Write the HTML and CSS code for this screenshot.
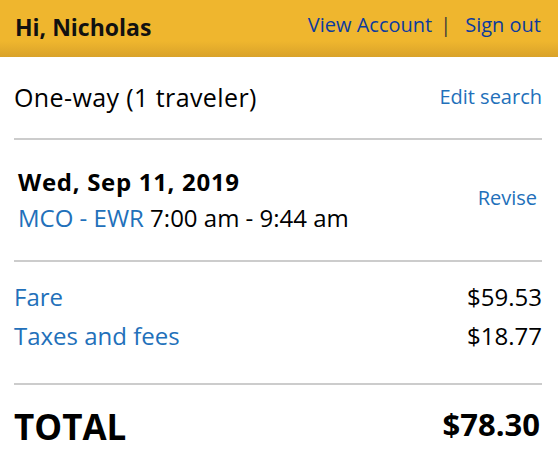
FILE: index.html
```html
<!DOCTYPE html>
<html>
<head>
<meta charset="utf-8">
<link rel="stylesheet" href="styles.css">
</head>
<body>
<header class="topbar">
  <div class="greeting">Hi, Nicholas</div>
  <nav class="account">
    <a class="toplink" href="#">View Account</a>
    <span class="sep">|</span>
    <a class="toplink" href="#">Sign out</a>
  </nav>
</header>
<main class="content">
  <section class="row trip">
    <div class="trip-type">One-way (1 traveler)</div>
    <a class="link small" href="#">Edit search</a>
  </section>
  <section class="row flight">
    <div class="flight-info">
      <div class="date">Wed, Sep 11, 2019</div>
      <div class="route"><span class="link">MCO - EWR</span> 7:00 am - 9:44 am</div>
    </div>
    <a class="link small revise" href="#">Revise</a>
  </section>
  <section class="costs">
    <div class="cost-row"><span class="link">Fare</span><span>$59.53</span></div>
    <div class="cost-row"><span class="link">Taxes and fees</span><span>$18.77</span></div>
  </section>
  <section class="total">
    <span class="total-label">TOTAL</span>
    <span class="total-amount">$78.30</span>
  </section>
</main>
</body>
</html>
```

FILE: styles.css
```css
*, *::before, *::after { box-sizing: border-box; }
html, body {
  margin: 0;
  padding: 0;
  background: #ffffff;
}
body {
  font-family: "Open Sans", "Noto Sans", sans-serif;
  color: #000;
  width: 558px;
}
a { text-decoration: none; }

.topbar {
  height: 57px;
  padding: 0 17px 6px 15px;
  display: flex;
  align-items: center;
  justify-content: space-between;
  background: linear-gradient(to bottom, #efb62e 0%, #efb62e 72%, #d9a22a 100%);
}
.greeting {
  font-size: 23px;
  font-weight: 700;
  color: #111;
  margin-top: 3px;
}
.account {
  display: flex;
  align-items: center;
  gap: 8px;
  font-size: 20px;
  margin-bottom: 2px;
}
.toplink { color: #0c3b9f; }
.sep { color: #3a3a3a; font-size: 20px; margin: 0 6px 0 0; }

.content {
  padding: 0 16px 0 14px;
}
.row {
  display: flex;
  justify-content: space-between;
  border-bottom: 2px solid #cccccc;
}
.trip {
  align-items: center;
  height: 83px;
  padding-bottom: 2px;
}
.trip-type { font-size: 25px; letter-spacing: 0.4px; }
.link { color: #2270ba; }
.small { font-size: 20px; }

.flight {
  align-items: center;
  height: 122px;
  padding-left: 4px;
}
.date { font-size: 24px; font-weight: 700; line-height: 36px; letter-spacing: 0.7px; }
.route { font-size: 24px; line-height: 36px; }
.revise { margin-right: 5px; margin-bottom: 6px; }

.costs {
  padding: 15px 0 28px;
  border-bottom: 2px solid #cccccc;
}
.cost-row {
  display: flex;
  justify-content: space-between;
  font-size: 24px;
  line-height: 39px;
}
.total {
  display: flex;
  justify-content: space-between;
  align-items: center;
  height: 83px;
}
.total-label { font-size: 35px; font-weight: 700; }
.total-amount { font-size: 31px; font-weight: 700; margin-bottom: 6px; margin-right: 2px; }
```
